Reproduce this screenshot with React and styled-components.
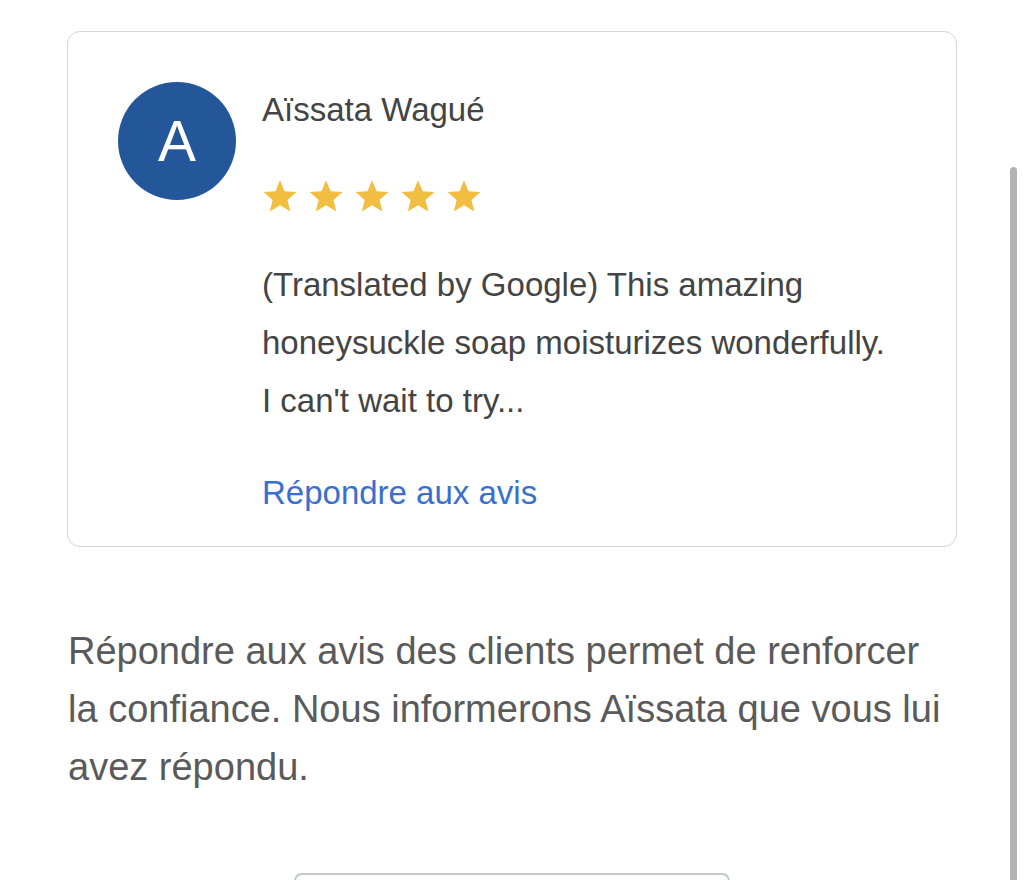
import React from "react";
import styled, { createGlobalStyle } from "styled-components";

const GlobalStyle = createGlobalStyle`
  html, body {
    margin: 0;
    padding: 0;
    background: #ffffff;
    font-family: "Liberation Sans", Arial, sans-serif;
    overflow: hidden;
  }
`;

const Page = styled.div`
  height: 880px;
  padding: 31px 67px 0;
  box-sizing: border-box;
  overflow: hidden;
`;

const Card = styled.div`
  display: flex;
  gap: 26px;
  border: 1px solid #d6d6d6;
  border-radius: 13px;
  padding: 50px 50px 25px 50px;
  height: 516px;
  box-sizing: border-box;
`;

const Avatar = styled.div`
  flex: none;
  width: 118px;
  height: 118px;
  border-radius: 50%;
  background: #24569a;
  color: #ffffff;
  display: flex;
  align-items: center;
  justify-content: center;
  font-size: 57px;
  line-height: 1;
`;

const Body = styled.div`
  display: flex;
  flex-direction: column;
  padding-top: 8px;
`;

const Name = styled.div`
  font-size: 33px;
  line-height: 40px;
  color: #444444;
`;

const Stars = styled.div`
  display: flex;
  gap: 10px;
  margin-top: 48px;
  height: 36px;
`;

const Review = styled.p`
  margin: 42px 0 0;
  font-size: 33px;
  line-height: 58px;
  color: #444444;
  width: 635px;
`;

const ReplyLink = styled.a`
  margin-top: 34px;
  font-size: 33px;
  line-height: 58px;
  color: #3a6fcf;
  text-decoration: none;
`;

const Info = styled.p`
  margin: 75px 0 0 1px;
  font-size: 38px;
  line-height: 58px;
  color: #5a5a5a;
`;

const Button = styled.div`
  width: 436px;
  height: 60px;
  margin: 77px auto 0;
  border: 2px solid #c4c7cb;
  border-radius: 8px;
  box-sizing: border-box;
`;

const Scrollbar = styled.div`
  position: fixed;
  right: 7px;
  top: 167px;
  bottom: 0;
  width: 7px;
  background: #b3b3b3;
  border-radius: 4px 4px 0 0;
`;

const Star = () => (
  <svg width="36" height="36" viewBox="0 0 24 24">
    <path
      fill="#f2be42"
      d="M12 1.5l3.1 7.3 7.9.6-6 5.2 1.9 7.7L12 18.1l-6.8 4.2 1.9-7.7-6-5.2 7.9-.6z"
    />
  </svg>
);

export default function App() {
  return (
    <>
      <GlobalStyle />
      <Page>
        <Card>
          <Avatar>A</Avatar>
          <Body>
            <Name>Aïssata Wagué</Name>
            <Stars>
              {[0, 1, 2, 3, 4].map((i) => (
                <Star key={i} />
              ))}
            </Stars>
            <Review>
              (Translated by Google) This amazing honeysuckle soap moisturizes
              wonderfully. I can't wait to try...
            </Review>
            <ReplyLink href="#">Répondre aux avis</ReplyLink>
          </Body>
        </Card>
        <Info>
          Répondre aux avis des clients permet de renforcer la confiance. Nous
          informerons Aïssata que vous lui avez répondu.
        </Info>
        <Button />
      </Page>
      <Scrollbar />
    </>
  );
}
